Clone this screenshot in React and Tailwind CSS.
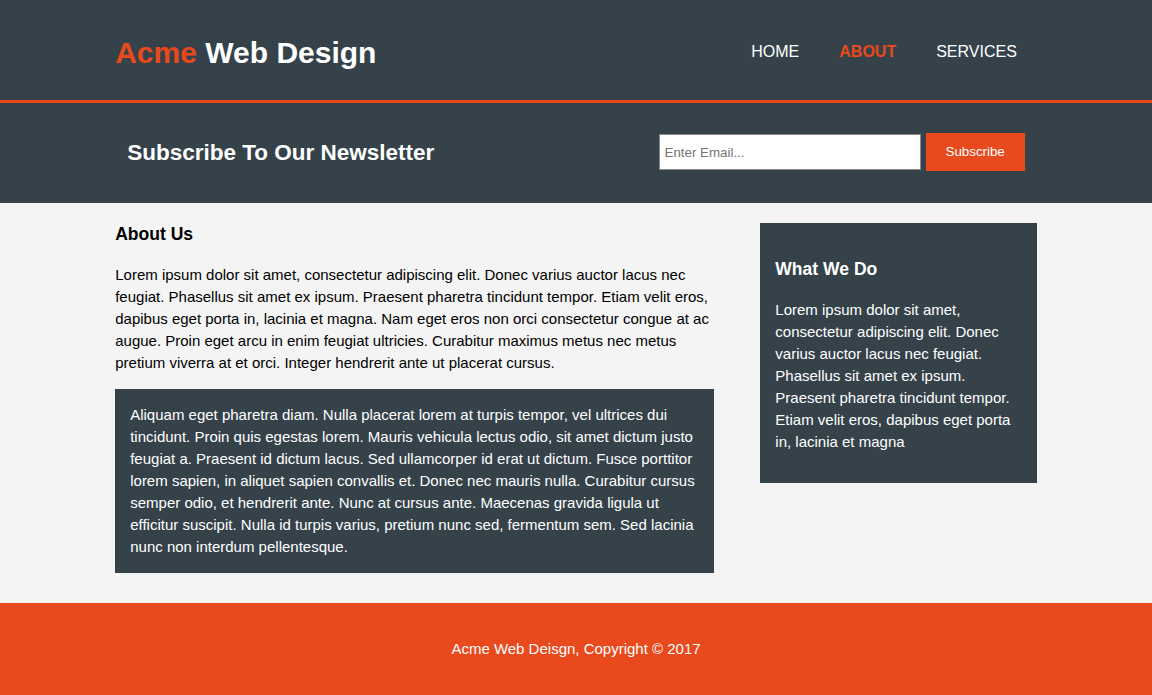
import React from 'react'

const mainText =
  'Lorem ipsum dolor sit amet, consectetur adipiscing elit. Donec varius auctor lacus nec feugiat. Phasellus sit amet ex ipsum. Praesent pharetra tincidunt tempor. Etiam velit eros, dapibus eget porta in, lacinia et magna. Nam eget eros non orci consectetur congue at ac augue. Proin eget arcu in enim feugiat ultricies. Curabitur maximus metus nec metus pretium viverra at et orci. Integer hendrerit ante ut placerat cursus.'

const darkText =
  'Aliquam eget pharetra diam. Nulla placerat lorem at turpis tempor, vel ultrices dui tincidunt. Proin quis egestas lorem. Mauris vehicula lectus odio, sit amet dictum justo feugiat a. Praesent id dictum lacus. Sed ullamcorper id erat ut dictum. Fusce porttitor lorem sapien, in aliquet sapien convallis et. Donec nec mauris nulla. Curabitur cursus semper odio, et hendrerit ante. Nunc at cursus ante. Maecenas gravida ligula ut efficitur suscipit. Nulla id turpis varius, pretium nunc sed, fermentum sem. Sed lacinia nunc non interdum pellentesque.'

const sideText =
  'Lorem ipsum dolor sit amet, consectetur adipiscing elit. Donec varius auctor lacus nec feugiat. Phasellus sit amet ex ipsum. Praesent pharetra tincidunt tempor. Etiam velit eros, dapibus eget porta in, lacinia et magna'

const navItems = [
  { label: 'Home', current: false },
  { label: 'About', current: true },
  { label: 'Services', current: false }
]

const App = () => {
  return (
    <div className="min-h-screen bg-[#f4f4f4] text-[15px] text-black font-['Liberation_Sans',Arial,sans-serif]">
      {/* header */}
      <header className="h-[103px] bg-[#35424a] text-white border-b-[3px] border-[#e8491d]">
        <div className="w-4/5 mx-auto flex justify-between pt-[30px]">
          <h1 className="text-[30px] font-bold leading-[45px]">
            <span className="text-[#e8491d]">Acme</span> Web Design
          </h1>
          <nav className="mt-[10px]">
            <ul className="flex">
              {navItems.map((item) => (
                <li key={item.label} className="px-[20px]">
                  <a
                    href="#"
                    className={`text-[16px] uppercase leading-[24px] ${item.current ? 'text-[#e8491d] font-bold' : 'text-white'}`}
                  >
                    {item.label}
                  </a>
                </li>
              ))}
            </ul>
          </nav>
        </div>
      </header>

      {/* newsletter */}
      <section className="h-[100px] bg-[#35424a] text-white px-[15px] flex items-center">
        <div className="w-4/5 mx-auto flex justify-between items-center">
          <h1 className="text-[22.5px] font-bold leading-[34px]">Subscribe To Our Newsletter</h1>
          <form className="flex items-center mb-[2px]" onSubmit={(e) => e.preventDefault()}>
            <input
              type="email"
              placeholder="Enter Email..."
              className="w-[262px] h-[36px] pl-[5px] pr-[4px] bg-white border border-[#8a8a8a] text-[13.33px] text-black placeholder:text-[#757575] outline-none"
            />
            <button
              type="submit"
              className="ml-[5px] h-[38px] px-[20px] bg-[#e8491d] text-white text-[13.33px]"
            >
              Subscribe
            </button>
          </form>
        </div>
      </section>

      {/* content */}
      <section className="w-4/5 mx-auto flex justify-between items-start">
        <article className="w-[65%]">
          <h1 className="text-[17.55px] font-bold leading-[26px] mt-[17.5px] mb-[17.5px]">About Us</h1>
          <p className="leading-[22px]">{mainText}</p>
          <div className="mt-[15px] mb-[10px] p-[15px] bg-[#35424a] text-white">
            <p className="leading-[22px]">{darkText}</p>
          </div>
        </article>

        <aside className="w-[30%] mt-[20px]">
          <div className="bg-[#35424a] text-white p-[15px]">
            <h3 className="text-[17.55px] font-bold leading-[26px] mt-[17.5px] mb-[17.5px]">What We Do</h3>
            <p className="leading-[22px] mb-[15px]">{sideText}</p>
          </div>
        </aside>
      </section>

      {/* footer */}
      <footer className="mt-[20px] py-[20px] bg-[#e8491d] text-white text-center">
        <p className="my-[15px] leading-[22px]">Acme Web Deisgn, Copyright &copy; 2017</p>
      </footer>
    </div>
  )
}

export default App
